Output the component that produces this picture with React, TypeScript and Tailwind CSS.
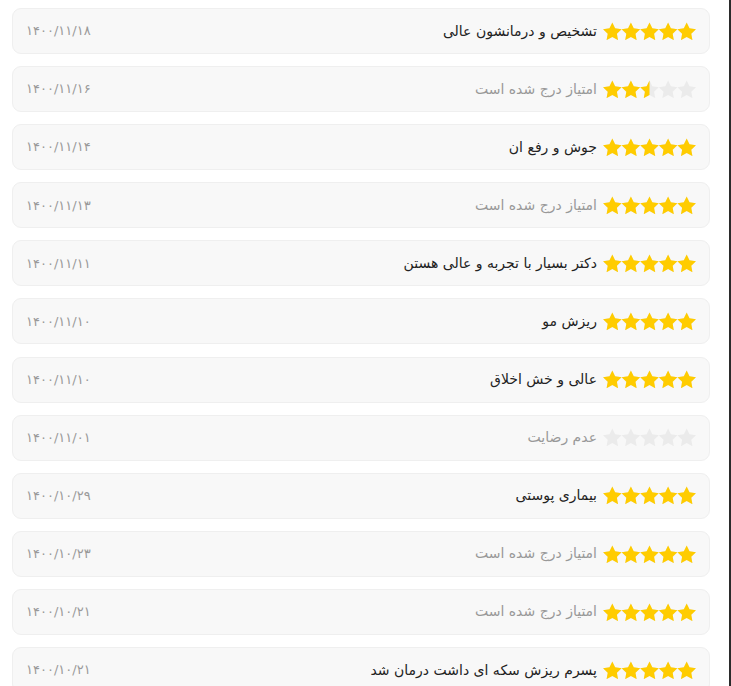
const reviews = [
  { rate: 5, text: "تشخیص و درمانشون عالی", date: "۱۴۰۰/۱۱/۱۸" },
  { rate: 2.5, text: "امتیاز درج شده است", date: "۱۴۰۰/۱۱/۱۶", muted: true },
  { rate: 5, text: "جوش و رفع ان", date: "۱۴۰۰/۱۱/۱۴" },
  { rate: 5, text: "امتیاز درج شده است", date: "۱۴۰۰/۱۱/۱۳", muted: true },
  { rate: 5, text: "دکتر بسیار با تجربه و عالی هستن", date: "۱۴۰۰/۱۱/۱۱" },
  { rate: 5, text: "ریزش مو", date: "۱۴۰۰/۱۱/۱۰" },
  { rate: 5, text: "عالی و خش اخلاق", date: "۱۴۰۰/۱۱/۱۰" },
  { rate: 0, text: "عدم رضایت", date: "۱۴۰۰/۱۱/۰۱", muted: true },
  { rate: 5, text: "بیماری پوستی", date: "۱۴۰۰/۱۰/۲۹" },
  { rate: 5, text: "امتیاز درج شده است", date: "۱۴۰۰/۱۰/۲۳", muted: true },
  { rate: 5, text: "امتیاز درج شده است", date: "۱۴۰۰/۱۰/۲۱", muted: true },
  { rate: 5, text: "پسرم ریزش سکه ای داشت درمان شد", date: "۱۴۰۰/۱۰/۲۱" },
];

const STAR =
  "M12 .587l3.668 7.568 8.332 1.151-6.064 5.828 1.48 8.279L12 19.446l-7.416 3.967 1.48-8.279L0 9.306l8.332-1.151z";

function Stars({ rate, id }: { rate: number; id: number }) {
  const clipId = `stars-${id}`;
  return (
    <svg width="93" height="18.6" viewBox="0 0 120 24" className="shrink-0" dir="ltr">
      <defs>
        <clipPath id={clipId}>
          {[0, 1, 2, 3, 4].map((i) => (
            <path key={i} d={STAR} transform={`translate(${i * 24} 0)`} />
          ))}
        </clipPath>
      </defs>
      <g clipPath={`url(#${clipId})`}>
        <rect x="0" y="0" width="120" height="24" fill="#ebebeb" />
        <rect x="0" y="0" width={(rate / 5) * 120} height="24" fill="#ffcc00" />
      </g>
    </svg>
  );
}

export default function App() {
  return (
    <div className="flex h-[686px] w-[731px] overflow-hidden bg-white">
      <div
        dir="rtl"
        className="flex flex-1 flex-col gap-[12.1px] pl-3 pr-[19px] pt-2"
        style={{ fontFamily: '"DejaVu Sans", sans-serif' }}
      >
        {reviews.map((r, i) => (
          <div
            key={i}
            className="flex h-[46px] shrink-0 items-center justify-between rounded-[9px] border border-[#efefef] bg-[#f8f8f8] pl-[13px] pr-[13px]"
          >
            <div className="flex items-center gap-[6px]">
              <Stars rate={r.rate} id={i} />
              <span className={`text-[14px] ${r.muted ? "text-[#999]" : "text-[#222]"}`}>{r.text}</span>
            </div>
            <span dir="ltr" className="text-[13px] text-[#9a9a9a]">
              {r.date}
            </span>
          </div>
        ))}
      </div>
      <div className="w-[2px] shrink-0 bg-[#2b2b2b]" />
    </div>
  );
}
